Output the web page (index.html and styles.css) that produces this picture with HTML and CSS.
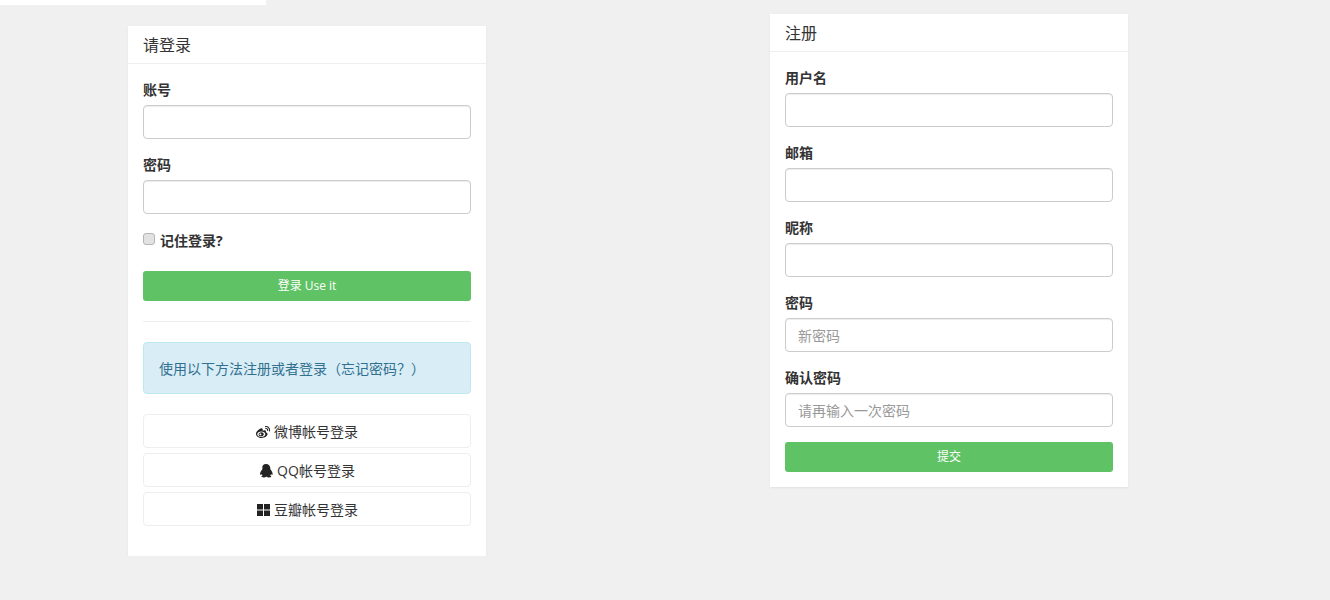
FILE: index.html
```html
<!DOCTYPE html>
<html lang="zh-CN">
<head>
  <meta charset="UTF-8">
  <meta name="viewport" content="width=device-width, initial-scale=1.0">
  <title>登录</title>
  <link rel="stylesheet" href="styles.css">
</head>
<body>
  <div class="top-bar"></div>

  <div class="columns">
    <div class="panel panel-login">
      <div class="panel-heading">请登录</div>
      <form class="panel-body">
        <div class="form-group">
          <label for="account">账号</label>
          <input type="text" id="account">
        </div>
        <div class="form-group">
          <label for="password">密码</label>
          <input type="password" id="password">
        </div>
        <label class="remember">
          <input type="checkbox">
          <span>记住登录?</span>
        </label>
        <button type="button" class="btn-green">登录 Use it</button>
        <hr>
        <div class="alert">使用以下方法注册或者登录（忘记密码？）</div>
        <a class="btn-social" href="#">
          <svg class="icon" width="14" height="14" viewBox="0 0 14 14">
            <path fill="#222" fill-rule="evenodd" d="M5.500 3.300C3 4 0 6.400 0 9c0 2.200 2.700 4 5.600 4 3.300 0 5.900-2 5.900-3.900 0-1.100-.9-1.600-1.700-1.800.3-.8.300-1.500-.3-1.900-.8-.4-1.900-.1-2.800.3.200-1.100-.2-2.700-1.200-2.400zM5.300 12C3.100 12 1.200 10.900 1.200 9.300s1.900-2.800 4.100-2.800 4 1.100 4 2.700-1.800 2.800-4 2.800z"/>
            <path fill="#222" fill-rule="evenodd" d="M5.300 7.200c-1.400 0-2.700 1-2.700 2.200s1.200 1.900 2.500 1.900 2.700-.9 2.700-2.100-1.100-2-2.500-2zM4.400 10.300c-.6 0-1-.4-1-.8 0-.5.500-.9 1-.9s1 .4 1 .8c0 .5-.5.900-1 .9z"/>
            <path fill="none" stroke="#222" stroke-width="1.100" stroke-linecap="round" d="M9.500 1.600c2.300-.4 4.500 1.500 3.900 4.300M9.700 3.500c1.200-.2 2 .8 1.800 2"/>
          </svg>
          微博帐号登录
        </a>
        <a class="btn-social" href="#">
          <svg class="icon" width="14" height="14" viewBox="0 0 14 14">
            <path fill="#222" d="M7 0c2.700 0 4.100 1.800 4.300 4.100 0 .5 0 .9.100 1.200.8 1.100 2.200 2.900 2.200 4.500 0 .8-.2 1.200-.5 1.200-.3 0-.7-.3-1-.9-.2.600-.5 1.100-.9 1.500.6.200 1.100.6 1.100 1 0 .6-1 .9-2.200.9-1.100 0-2-.3-2.400-.8-.2 0-.5 0-.7 0-.4.500-1.300.8-2.400.8-1.200 0-2.200-.3-2.200-.9 0-.4.500-.8 1.100-1-.4-.4-.7-.9-.9-1.500-.3.600-.7.900-1 .9-.3 0-.5-.4-.5-1.200 0-1.600 1.400-3.400 2.200-4.500.1-.3.100-.7.100-1.200C2.900 1.800 4.300 0 7 0z"/>
          </svg>
          QQ帐号登录
        </a>
        <a class="btn-social" href="#">
          <svg class="icon" width="14" height="14" viewBox="0 0 14 14">
            <path fill="#222" d="M1 1h6v5.500H1zM8 1h6v5.500H8zM1 7.500h6V13H1zM8 7.500h6V13H8z"/>
          </svg>
          豆瓣帐号登录
        </a>
      </form>
    </div>

    <div class="panel panel-register">
      <div class="panel-heading">注册</div>
      <form class="panel-body">
        <div class="form-group">
          <label for="username">用户名</label>
          <input type="text" id="username">
        </div>
        <div class="form-group">
          <label for="email">邮箱</label>
          <input type="email" id="email">
        </div>
        <div class="form-group">
          <label for="nickname">昵称</label>
          <input type="text" id="nickname">
        </div>
        <div class="form-group">
          <label for="newpass">密码</label>
          <input type="password" id="newpass" placeholder="新密码">
        </div>
        <div class="form-group">
          <label for="repass">确认密码</label>
          <input type="password" id="repass" placeholder="请再输入一次密码">
        </div>
        <button type="button" class="btn-green">提交</button>
      </form>
    </div>
  </div>
</body>
</html>
```

FILE: styles.css
```css
* {
  box-sizing: border-box;
}
body {
  margin: 0;
  background-color: #f0f0f0;
  font-family: "Open Sans", "Noto Sans CJK SC", sans-serif;
  font-size: 14px;
  line-height: 20px;
  color: #333;
}
.top-bar {
  width: 266px;
  height: 5px;
  background-color: #fff;
}
.columns {
  display: flex;
  align-items: flex-start;
  gap: 284px;
  padding-left: 128px;
  padding-top: 9px;
}
.panel {
  width: 358px;
  background-color: #fff;
  box-shadow: 0 1px 2px rgba(0, 0, 0, 0.06);
}
.panel-login {
  margin-top: 12px;
}
.panel-heading {
  height: 38px;
  padding: 9px 15px;
  font-size: 16px;
  border-bottom: 1px solid #eee;
}
.panel-body {
  padding: 15px 15px 25px;
}
.panel-register .panel-body {
  padding-bottom: 15px;
}
.form-group {
  margin-bottom: 15px;
}
.form-group label {
  display: block;
  height: 21px;
  margin-bottom: 5px;
  padding-top: 1px;
  font-weight: 700;
}
.form-group input {
  display: block;
  width: 100%;
  height: 34px;
  padding: 6px 12px;
  border: 1px solid #ccc;
  border-radius: 4px;
  box-shadow: inset 0 1px 1px rgba(0, 0, 0, 0.075);
  font-family: inherit;
  font-size: 14px;
  color: #555;
}
.form-group input::placeholder {
  color: #999;
}
.remember {
  display: flex;
  align-items: center;
  height: 21px;
  margin-bottom: 21px;
  padding-top: 2px;
  font-weight: 700;
}
.remember input {
  appearance: none;
  width: 12px;
  height: 12px;
  margin: 0 5px 4px 0;
  border: 1px solid #b5b5b5;
  border-radius: 3px;
  background-color: #e2e2e2;
}
.btn-green {
  display: block;
  width: 100%;
  height: 30px;
  padding: 0 0 2px;
  border: none;
  border-radius: 3px;
  background-color: #5fc264;
  color: #fff;
  font-family: inherit;
  font-size: 12px;
}
hr {
  height: 1px;
  margin: 20px 0;
  border: none;
  background-color: #eee;
}
.alert {
  height: 52px;
  padding: 16px 15px 14px;
  margin-bottom: 20px;
  border: 1px solid #bce8f1;
  border-radius: 4px;
  background-color: #d9edf7;
  color: #31708f;
}
.btn-social {
  display: flex;
  align-items: center;
  justify-content: center;
  gap: 4px;
  height: 34px;
  margin-bottom: 5px;
  padding-top: 2px;
  border: 1px solid #eee;
  border-radius: 4px;
  color: #333;
  text-decoration: none;
}
```
